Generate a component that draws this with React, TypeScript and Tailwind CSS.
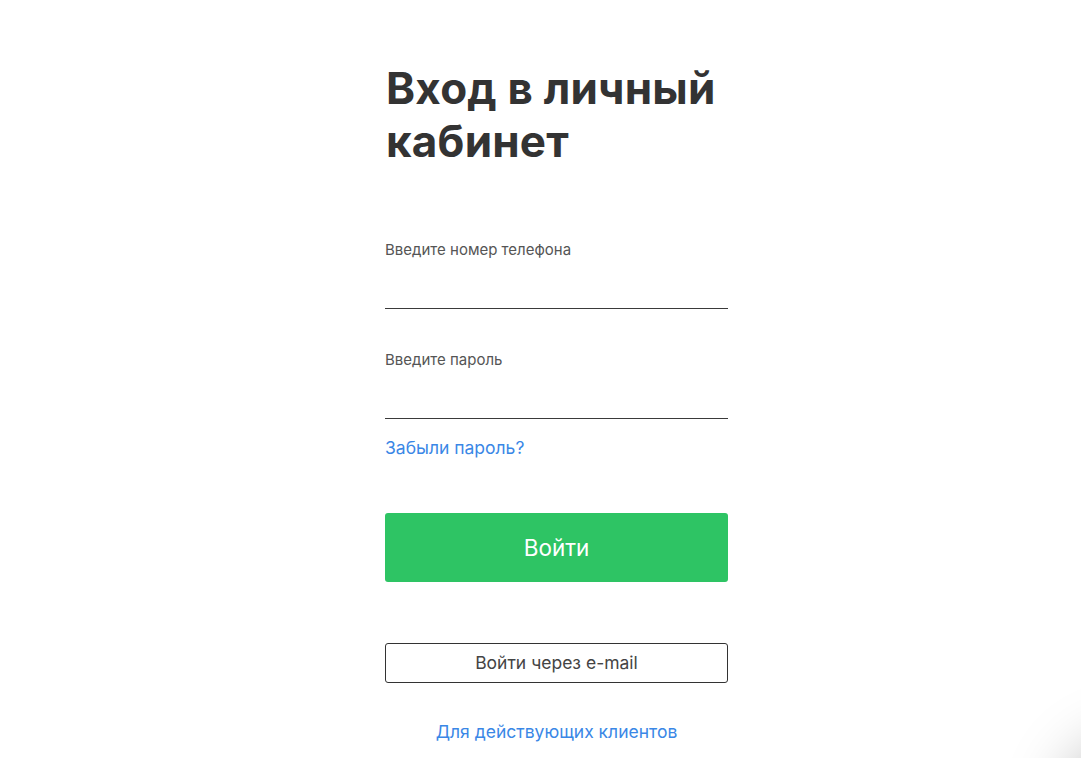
import React from "react";

export default function App() {
  return (
    <div
      className="relative min-h-[758px] w-full overflow-hidden bg-white"
      style={{ fontFamily: "Inter, 'Noto Sans', sans-serif" }}
    >
      <div className="flex justify-center pl-[32px]">
        <div className="flex w-[343px] flex-col pt-[62px]">
          <h1 className="text-[44px] font-bold leading-[53px] tracking-[0.2px] text-[#333333] pl-[1px]">
            Вход в личный кабинет
          </h1>

          <label className="mt-[73px] block text-[15px] leading-[18px] text-[#555555]">
            Введите номер телефона
          </label>
          <input
            type="tel"
            className="mt-[26px] h-[24px] w-full border-b border-[#3a3a3a] bg-transparent outline-none"
          />

          <label className="mt-[42px] block text-[15px] leading-[18px] text-[#555555]">
            Введите пароль
          </label>
          <input
            type="password"
            className="mt-[26px] h-[24px] w-full border-b border-[#3a3a3a] bg-transparent outline-none"
          />

          <a className="mt-[18px] block cursor-pointer text-[17.5px] leading-[22px] text-[#3a87e6]">
            Забыли пароль?
          </a>

          <button className="mt-[54px] flex h-[69px] w-full items-center justify-center rounded-[3px] bg-[#2ec464] text-[22.5px] font-normal text-white">
            Войти
          </button>

          <button className="mt-[61px] flex h-[40px] w-full items-center justify-center rounded-[3px] border border-[#333333] bg-white text-[17.5px] font-normal text-[#444444]">
            Войти через e-mail
          </button>

          <a className="mt-[38px] block cursor-pointer text-center text-[17.5px] leading-[22px] text-[#3a87e6]">
            Для действующих клиентов
          </a>
        </div>
      </div>

      <div className="pointer-events-none absolute bottom-[-110px] right-[-110px] h-[110px] w-[110px] rounded-full bg-white shadow-[0_0_60px_20px_rgba(0,0,0,0.25)]" />
    </div>
  );
}
